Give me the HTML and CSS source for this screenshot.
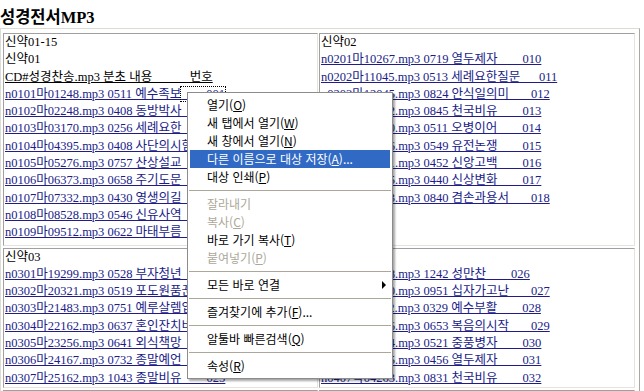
FILE: index.html
```html
<!DOCTYPE html>
<html lang="ko">
<head>
	<meta charset="UTF-8">
	<title>성경전서MP3</title>
	<link rel="stylesheet" href="styles.css">
</head>
<body>
	<div class="title">성경전서MP3</div>
	<div class="frame">
		<div class="cell">
			신약01-15<br>
			신약01<br>
			<u>CD#성경찬송.mp3 분초 내용&nbsp;&nbsp;&nbsp;&nbsp;&nbsp;&nbsp;&nbsp;&nbsp;&nbsp;&nbsp;&nbsp;&nbsp;번호</u><br>
			<a href="#">n0101마01248.mp3 0511 예수족보</a><a href="#" class="focus">&nbsp;&nbsp;&nbsp;&nbsp;&nbsp;&nbsp;&nbsp;&nbsp;001</a><br>
			<a href="#">n0102마02248.mp3 0408 동방박사&nbsp;&nbsp;&nbsp;&nbsp;&nbsp;&nbsp;&nbsp;&nbsp;002</a><br>
			<a href="#">n0103마03170.mp3 0256 세례요한&nbsp;&nbsp;&nbsp;&nbsp;&nbsp;&nbsp;&nbsp;&nbsp;003</a><br>
			<a href="#">n0104마04395.mp3 0408 사단의시험&nbsp;&nbsp;&nbsp;&nbsp;&nbsp;&nbsp;&nbsp;004</a><br>
			<a href="#">n0105마05276.mp3 0757 산상설교&nbsp;&nbsp;&nbsp;&nbsp;&nbsp;&nbsp;&nbsp;&nbsp;005</a><br>
			<a href="#">n0106마06373.mp3 0658 주기도문&nbsp;&nbsp;&nbsp;&nbsp;&nbsp;&nbsp;&nbsp;&nbsp;006</a><br>
			<a href="#">n0107마07332.mp3 0430 영생의길&nbsp;&nbsp;&nbsp;&nbsp;&nbsp;&nbsp;&nbsp;&nbsp;007</a><br>
			<a href="#">n0108마08528.mp3 0546 신유사역&nbsp;&nbsp;&nbsp;&nbsp;&nbsp;&nbsp;&nbsp;&nbsp;008</a><br>
			<a href="#">n0109마09512.mp3 0622 마태부름&nbsp;&nbsp;&nbsp;&nbsp;&nbsp;&nbsp;&nbsp;&nbsp;009</a>
		</div>
		<div class="cell">
			신약02<br>
			<a href="#">n0201마10267.mp3 0719 열두제자&nbsp;&nbsp;&nbsp;&nbsp;&nbsp;&nbsp;&nbsp;&nbsp;010</a><br>
			<a href="#">n0202마11045.mp3 0513 세례요한질문&nbsp;&nbsp;&nbsp;&nbsp;&nbsp;&nbsp;011</a><br>
			<a href="#">n0203마12045.mp3 0824 안식일의미&nbsp;&nbsp;&nbsp;&nbsp;&nbsp;&nbsp;&nbsp;012</a><br>
			<a href="#">n0204마13082.mp3 0845 천국비유&nbsp;&nbsp;&nbsp;&nbsp;&nbsp;&nbsp;&nbsp;&nbsp;013</a><br>
			<a href="#">n0205마14120.mp3 0511 오병이어&nbsp;&nbsp;&nbsp;&nbsp;&nbsp;&nbsp;&nbsp;&nbsp;014</a><br>
			<a href="#">n0206마15086.mp3 0549 유전논쟁&nbsp;&nbsp;&nbsp;&nbsp;&nbsp;&nbsp;&nbsp;&nbsp;015</a><br>
			<a href="#">n0207마16151.mp3 0452 신앙고백&nbsp;&nbsp;&nbsp;&nbsp;&nbsp;&nbsp;&nbsp;&nbsp;016</a><br>
			<a href="#">n0208마17205.mp3 0440 신상변화&nbsp;&nbsp;&nbsp;&nbsp;&nbsp;&nbsp;&nbsp;&nbsp;017</a><br>
			<a href="#">n0209마18233.mp3 0840 겸손과용서&nbsp;&nbsp;&nbsp;&nbsp;&nbsp;&nbsp;&nbsp;018</a>
		</div>
		<div class="cell">
			신약03<br>
			<a href="#">n0301마19299.mp3 0528 부자청년&nbsp;&nbsp;&nbsp;&nbsp;&nbsp;&nbsp;&nbsp;&nbsp;019</a><br>
			<a href="#">n0302마20321.mp3 0519 포도원품꾼&nbsp;&nbsp;&nbsp;&nbsp;&nbsp;&nbsp;&nbsp;020</a><br>
			<a href="#">n0303마21483.mp3 0751 예루살렘입성&nbsp;&nbsp;&nbsp;&nbsp;&nbsp;&nbsp;021</a><br>
			<a href="#">n0304마22162.mp3 0637 혼인잔치비유&nbsp;&nbsp;&nbsp;&nbsp;&nbsp;&nbsp;022</a><br>
			<a href="#">n0305마23256.mp3 0641 외식책망&nbsp;&nbsp;&nbsp;&nbsp;&nbsp;&nbsp;&nbsp;&nbsp;023</a><br>
			<a href="#">n0306마24167.mp3 0732 종말예언&nbsp;&nbsp;&nbsp;&nbsp;&nbsp;&nbsp;&nbsp;&nbsp;024</a><br>
			<a href="#">n0307마25162.mp3 1043 종말비유&nbsp;&nbsp;&nbsp;&nbsp;&nbsp;&nbsp;&nbsp;&nbsp;025</a>
		</div>
		<div class="cell">
			신약04<br>
			<a href="#">n0401마26318.mp3 1242 성만찬&nbsp;&nbsp;&nbsp;&nbsp;&nbsp;&nbsp;&nbsp;&nbsp;026</a><br>
			<a href="#">n0402마27290.mp3 0951 십자가고난&nbsp;&nbsp;&nbsp;&nbsp;&nbsp;&nbsp;&nbsp;027</a><br>
			<a href="#">n0403마28112.mp3 0329 예수부활&nbsp;&nbsp;&nbsp;&nbsp;&nbsp;&nbsp;&nbsp;&nbsp;028</a><br>
			<a href="#">n0404막01236.mp3 0653 복음의시작&nbsp;&nbsp;&nbsp;&nbsp;&nbsp;&nbsp;&nbsp;029</a><br>
			<a href="#">n0405막02184.mp3 0521 중풍병자&nbsp;&nbsp;&nbsp;&nbsp;&nbsp;&nbsp;&nbsp;&nbsp;030</a><br>
			<a href="#">n0406막03155.mp3 0456 열두제자&nbsp;&nbsp;&nbsp;&nbsp;&nbsp;&nbsp;&nbsp;&nbsp;031</a><br>
			<a href="#">n0407막04263.mp3 0831 천국비유&nbsp;&nbsp;&nbsp;&nbsp;&nbsp;&nbsp;&nbsp;&nbsp;032</a>
		</div>
		<div class="cell">
			신약05<br>
			<a href="#">n0501막05301.mp3 0914 거라사광인&nbsp;&nbsp;&nbsp;&nbsp;&nbsp;&nbsp;&nbsp;033</a>
		</div>
		<div class="cell">
			신약06<br>
			<a href="#">n0601막06245.mp3 0733 세례요한죽음&nbsp;&nbsp;&nbsp;&nbsp;&nbsp;&nbsp;034</a>
		</div>
	</div>

	<!-- 오른쪽 클릭 메뉴 -->
	<div class="menu">
		<div class="item">열기(<u>O</u>)</div>
		<div class="item">새 탭에서 열기(<u>W</u>)</div>
		<div class="item">새 창에서 열기(<u>N</u>)</div>
		<div class="item on">다른 이름으로 대상 저장(<u>A</u>)...</div>
		<div class="item">대상 인쇄(<u>P</u>)</div>
		<div class="sep"></div>
		<div class="item off">잘라내기</div>
		<div class="item off">복사(<u>C</u>)</div>
		<div class="item">바로 가기 복사(<u>T</u>)</div>
		<div class="item off">붙여넣기(<u>P</u>)</div>
		<div class="sep"></div>
		<div class="item sub"><span>모든 바로 연결</span><span class="arrow"></span></div>
		<div class="sep"></div>
		<div class="item">즐겨찾기에 추가(<u>F</u>)...</div>
		<div class="sep"></div>
		<div class="item">알툴바 빠른검색(<u>Q</u>)</div>
		<div class="sep"></div>
		<div class="item">속성(<u>R</u>)</div>
	</div>
</body>
</html>
```
FILE: styles.css
```css
body{margin: 0; background: #fff; color: #000; font-family: "Liberation Serif", "Noto Sans CJK KR", serif; font-size: 12.5px;}
.title{height: 28px; padding-top: 8px; box-sizing: border-box; font-size: 16.5px; line-height: 20px; font-weight: bold;}

.frame{width: 640px; box-sizing: border-box; border: 1px solid; border-color: #dcdcd4 #a8a8a0 #a8a8a0 #dcdcd4; padding: 4px 5px 0 2px; display: grid; grid-template-columns: 315px 316px; grid-template-rows: auto 140px auto; column-gap: 1px; row-gap: 2px;}
.cell{border: 1px solid; border-color: #a0a0a0 #e4e4dc #e4e4dc #a0a0a0; padding: 0 0 3px 1px; line-height: 17.3px; white-space: nowrap; overflow: hidden;}
.cell a{color: #201c88; text-decoration: underline;}
.focus{outline: 1px dotted #000;}

.menu{position: absolute; left: 187px; top: 92px; width: 204px; padding: 3px 0; border: 1px solid #8c8c8c; background: #fff; box-shadow: 2px 2px 2px rgba(0,0,0,0.35); font-family: "Noto Sans CJK KR", "Liberation Sans", sans-serif; font-size: 12px;}
.item{height: 18px; line-height: 18px; margin: 0 2px; padding: 0 4px 0 17px; white-space: nowrap;}
.item.on{background: #316ac5; color: #fff;}
.item.off{color: #aca899;}
.item.sub{display: flex; justify-content: space-between; align-items: center;}
.sep{height: 1px; margin: 4px 1px; background: #aca899;}
.arrow{width: 0; height: 0; border-left: 4px solid #000; border-top: 4px solid transparent; border-bottom: 4px solid transparent;}
```
